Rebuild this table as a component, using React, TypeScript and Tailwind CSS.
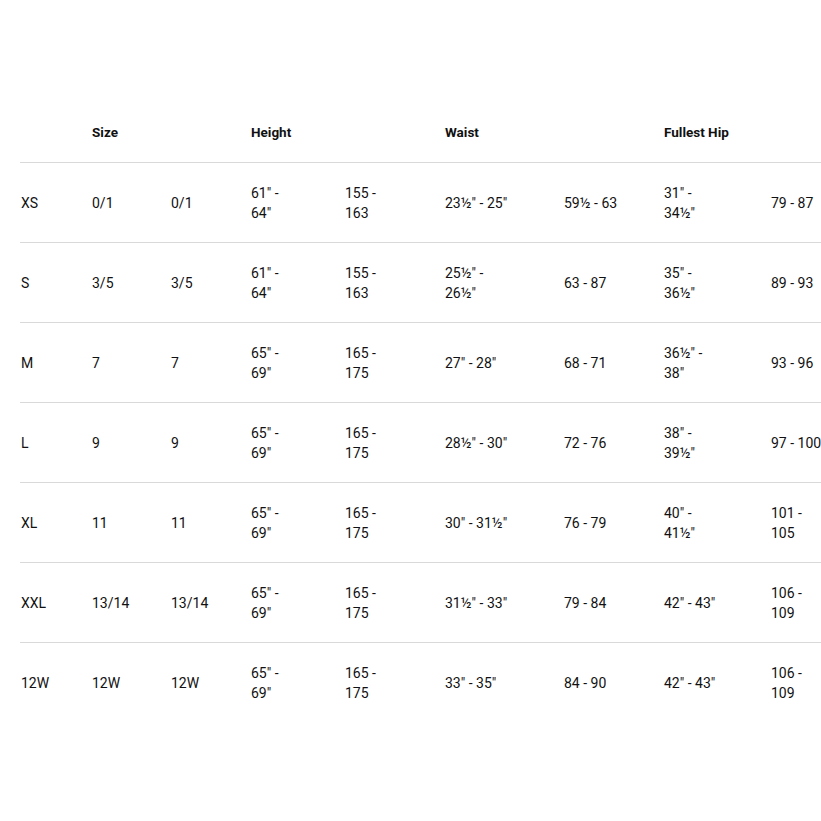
const headers = ["", "Size", "", "Height", "", "Waist", "", "Fullest Hip", ""];

const rows: string[][] = [
  ["XS", "0/1", "0/1", "61\" -\n64\"", "155 -\n163", "23½\" - 25\"", "59½ - 63", "31\" -\n34½\"", "79 - 87"],
  ["S", "3/5", "3/5", "61\" -\n64\"", "155 -\n163", "25½\" -\n26½\"", "63 - 87", "35\" -\n36½\"", "89 - 93"],
  ["M", "7", "7", "65\" -\n69\"", "165 -\n175", "27\" - 28\"", "68 - 71", "36½\" -\n38\"", "93 - 96"],
  ["L", "9", "9", "65\" -\n69\"", "165 -\n175", "28½\" - 30\"", "72 - 76", "38\" -\n39½\"", "97 - 100"],
  ["XL", "11", "11", "65\" -\n69\"", "165 -\n175", "30\" - 31½\"", "76 - 79", "40\" -\n41½\"", "101 -\n105"],
  ["XXL", "13/14", "13/14", "65\" -\n69\"", "165 -\n175", "31½\" - 33\"", "79 - 84", "42\" - 43\"", "106 -\n109"],
  ["12W", "12W", "12W", "65\" -\n69\"", "165 -\n175", "33\" - 35\"", "84 - 90", "42\" - 43\"", "106 -\n109"],
];

const cols = "grid grid-cols-[71px_79px_80px_94px_100px_119px_100px_107px_1fr] items-center";

export default function App() {
  return (
    <div
      className="w-[821px] h-[821px] overflow-hidden bg-white text-[#111] pt-[102px] pl-[20px]"
      style={{ fontFamily: "Roboto, 'Liberation Sans', Arial, sans-serif" }}
    >
      <div className={`${cols} h-[60px]`}>
        {headers.map((h, i) => (
          <div key={i} className="pl-px text-[13.5px] font-bold whitespace-nowrap">
            {h}
          </div>
        ))}
      </div>
      {rows.map((row, r) => (
        <div key={r} className={`${cols} h-[80px] border-t border-[#d9d9d9]`}>
          {row.map((cell, c) => (
            <div key={c} className="pl-px text-[14px] leading-[20px] whitespace-pre">
              {cell}
            </div>
          ))}
        </div>
      ))}
    </div>
  );
}
